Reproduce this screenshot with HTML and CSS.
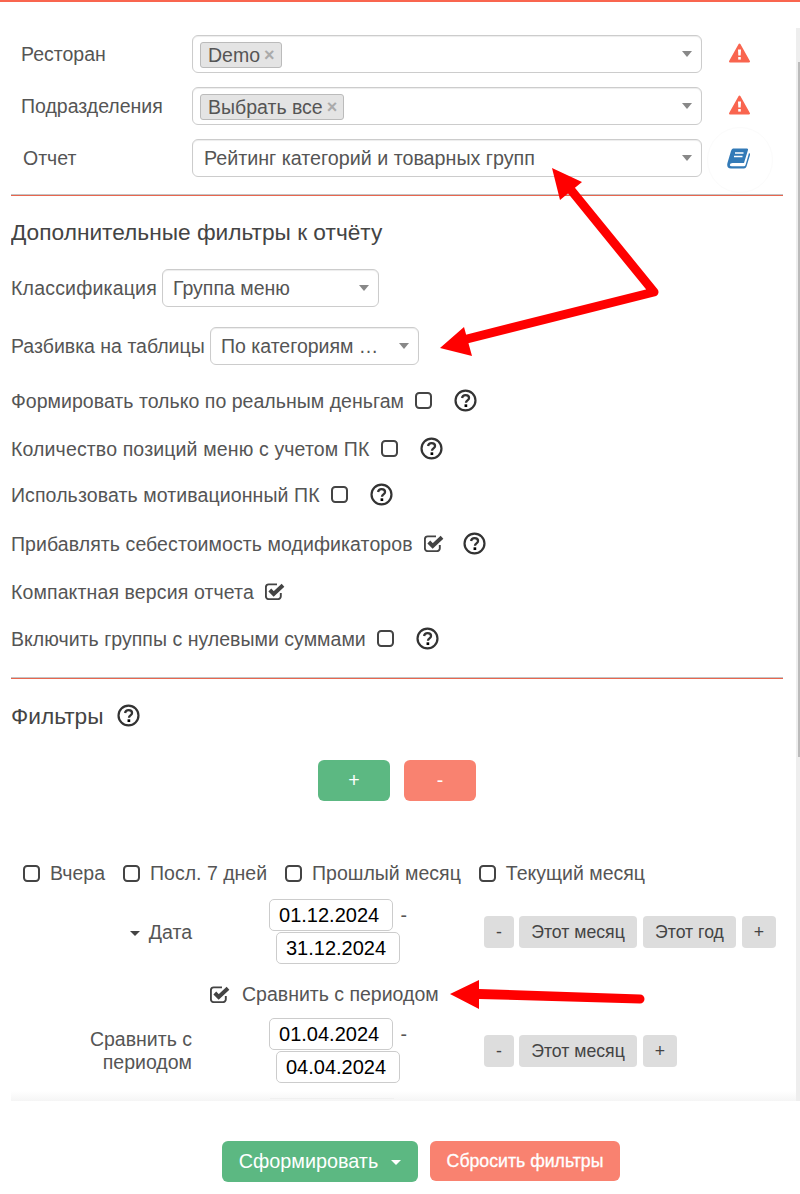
FILE: index.html
```html
<!DOCTYPE html>
<html lang="ru">
<head>
  <meta charset="UTF-8">
  <title>Отчет</title>
  <meta name="viewport" content="width=device-width, initial-scale=1.0">
  <link rel="stylesheet" href="styles.css">
</head>
<body>
  <svg class="defs" width="0" height="0" aria-hidden="true">
    <symbol id="i-help" viewBox="0 0 24 24">
      <circle cx="12" cy="12" r="10.400" fill="none" stroke="currentColor" stroke-width="2.300"/>
      <path d="M8.400 9.400c.3-2 1.800-3 3.700-3 2.100 0 3.600 1.200 3.600 3 0 2.600-3.200 2.500-3.200 5" fill="none" stroke="currentColor" stroke-width="2.400"/>
      <rect x="11" y="16" width="2.800" height="2.800"/>
    </symbol>
    <symbol id="i-box" viewBox="0 0 17 17">
      <rect x="1" y="1" width="15" height="15" rx="3.200" fill="none" stroke="currentColor" stroke-width="2"/>
    </symbol>
    <symbol id="i-check" viewBox="0 0 20 17">
      <path d="M15.800 10v3.300a2.800 2.800 0 0 1-2.800 2.800H3.700a2.800 2.800 0 0 1-2.800-2.800V4.200a2.800 2.800 0 0 1 2.800-2.800H12" fill="none" stroke="currentColor" stroke-width="1.900"/>
      <path d="M4.800 7l3.900 3.900L18 2.300" fill="none" stroke="currentColor" stroke-width="4"/>
    </symbol>
    <symbol id="i-warn" viewBox="0 0 21 20">
      <path d="M10.500 1.500 20 18.500H1Z" stroke="currentColor" stroke-width="2" stroke-linejoin="round"/>
      <path d="M9 6.500h3l-.3 6h-2.400Z" fill="#fff"/>
      <rect x="9.200" y="14" width="2.600" height="2.600" fill="#fff"/>
    </symbol>
  </svg>

  <div class="top-line"></div>

  <main class="panel">
    <section class="main-rows">
      <div class="main-row">
        <label class="main-label">Ресторан</label>
        <div class="select">
          <span class="tag">Demo<span class="tag-x">×</span></span>
          <span class="caret"></span>
        </div>
        <span class="side-icon"><svg class="warn"><use href="#i-warn"/></svg></span>
      </div>
      <div class="main-row">
        <label class="main-label">Подразделения</label>
        <div class="select">
          <span class="tag">Выбрать все<span class="tag-x">×</span></span>
          <span class="caret"></span>
        </div>
        <span class="side-icon"><svg class="warn"><use href="#i-warn"/></svg></span>
      </div>
      <div class="main-row">
        <label class="main-label shift">Отчет</label>
        <div class="select">
          <span class="select-text wide">Рейтинг категорий и товарных групп</span>
          <span class="caret"></span>
        </div>
        <span class="side-icon ring">
          <svg class="book" viewBox="0 0 24 21">
            <path d="M6 .5H20Q21.500 .5 21 2L17 15H5.500Q3 15 2.800 17Q2.800 18.300 5 18.300H17Q18 18.300 18.500 17L22 5Q23.500 5.500 23 7L19.500 18.500Q18.800 20.500 17 20.500H4Q0 20.500 .2 16.500Q.3 15.500 .6 14.500L4 3Q4.800 .5 6 .5Z" fill="#337ab7"/>
            <path d="M8 5H16.500M7 8.500H15.500" stroke="#fff" stroke-width="1.600"/>
          </svg>
        </span>
      </div>
    </section>

    <hr class="divider first">

    <h2 class="title">Дополнительные фильтры к отчёту</h2>

    <div class="extra-row one">
      <label>Классификация</label>
      <div class="select w217"><span class="select-text">Группа меню</span><span class="caret"></span></div>
    </div>
    <div class="extra-row two">
      <label>Разбивка на таблицы</label>
      <div class="select w209"><span class="select-text">По категориям …</span><span class="caret"></span></div>
    </div>

    <div class="opt opt1">Формировать только по реальным деньгам<svg class="box"><use href="#i-box"/></svg><svg class="help"><use href="#i-help"/></svg></div>
    <div class="opt opt2">Количество позиций меню с учетом ПК<svg class="box"><use href="#i-box"/></svg><svg class="help"><use href="#i-help"/></svg></div>
    <div class="opt opt3">Использовать мотивационный ПК<svg class="box"><use href="#i-box"/></svg><svg class="help"><use href="#i-help"/></svg></div>
    <div class="opt opt4">Прибавлять себестоимость модификаторов<svg class="tick"><use href="#i-check"/></svg><svg class="help"><use href="#i-help"/></svg></div>
    <div class="opt opt5">Компактная версия отчета<svg class="tick"><use href="#i-check"/></svg></div>
    <div class="opt opt6">Включить группы с нулевыми суммами<svg class="box"><use href="#i-box"/></svg><svg class="help"><use href="#i-help"/></svg></div>

    <hr class="divider second">

    <h2 class="title filters">Фильтры<svg class="help"><use href="#i-help"/></svg></h2>

    <div class="add-remove">
      <button class="btn green">+</button>
      <button class="btn salmon">-</button>
    </div>

    <div class="presets">
      <span class="preset"><svg class="box"><use href="#i-box"/></svg>Вчера</span>
      <span class="preset"><svg class="box"><use href="#i-box"/></svg>Посл. 7 дней</span>
      <span class="preset"><svg class="box"><use href="#i-box"/></svg>Прошлый месяц</span>
      <span class="preset"><svg class="box"><use href="#i-box"/></svg>Текущий месяц</span>
    </div>

    <div class="date-row">
      <div class="date-label"><span class="down"></span>Дата</div>
      <div class="date-col">
        <div class="dates"><input class="date" value="01.12.2024"> - <input class="date" value="31.12.2024"></div>
      </div>
      <div class="date-btns">
        <button class="gray w30">-</button>
        <button class="gray w118">Этот месяц</button>
        <button class="gray w93">Этот год</button>
        <button class="gray w34">+</button>
      </div>
    </div>

    <div class="compare"><svg class="tick"><use href="#i-check"/></svg>Сравнить с периодом</div>

    <div class="date-row last">
      <div class="date-label">Сравнить с периодом</div>
      <div class="date-col">
        <div class="dates"><input class="date" value="01.04.2024"> - <input class="date" value="04.04.2024"></div>
      </div>
      <div class="date-btns">
        <button class="gray w30">-</button>
        <button class="gray w118">Этот месяц</button>
        <button class="gray w34">+</button>
      </div>
    </div>
    <div class="fade"></div>
  </main>

  <footer class="actions">
    <button class="btn green make">Сформировать<span class="down white"></span></button>
    <button class="btn salmon reset">Сбросить фильтры</button>
  </footer>

  <div class="scroll-track"><div class="scroll-thumb"></div></div>

  <!-- стрелки поверх скриншота -->
  <svg class="arrows" width="800" height="1194" viewBox="0 0 800 1194">
    <path d="M571 190 654 292 463 340" fill="none" stroke="#f00" stroke-width="9" stroke-linejoin="round"/>
    <path d="M552 168 582 182 560 200Z M440 348 464 327 472 356Z" fill="#f00"/>
    <path d="M479 980 450 994 479 1009 479 999 640 1003.500a4 4 0 0 0 0-9L479 989Z" fill="#f00"/>
  </svg>
</body>
</html>
```

FILE: styles.css
```css
* {box-sizing:border-box;}
html, body {margin:0; padding:0;}
body {
  position:relative;
  width:800px; height:1194px;
  overflow:hidden;
  background:#fff;
  color:#555;
  font-family:"Liberation Sans",Arial,sans-serif;
  font-size:19.500px;
}
.defs {position:absolute;}
.top-line {height:2px; background:#f9654f;}

.panel {
  position:relative;
  height:1099px;
  margin-left:11px; margin-right:4px;
  padding-right:13px;
  overflow:hidden;
}

/* верхние строки */
.main-rows {padding-top:33px; display:flex; flex-direction:column; gap:14px;}
.main-row {display:flex; align-items:center; height:38px;}
.main-label {width:181px; padding-left:10px;}
.main-label.shift {padding-left:12px;}
.select {
  position:relative;
  display:flex; align-items:center;
  width:510px; height:38px;
  padding:0 11px 0 7px;
  border:1px solid #ccc;
  border-radius:6px;
  background:#fff;
  box-shadow:inset 0 1px 1px rgba(0,0,0,0.075);
}
.select-text {padding-left:3px; white-space:nowrap;}
.select-text.wide {padding-left:4px; font-size:19.700px;}
.w217 {width:217px;}
.w209 {width:209px;}
.tag {
  display:inline-flex; align-items:center;
  height:26px; margin-top:2px; padding:0 6px 0 7px;
  border:1px solid #bbb;
  border-radius:3px;
  background:#e4e4e4;
}
.tag-x {margin-left:4px; color:#aaa; font-weight:bold; font-size:18px;}
.caret {
  position:absolute; right:9px; top:15px;
  border-top:6px solid #888;
  border-left:5px solid transparent;
  border-right:5px solid transparent;
}
.side-icon {
  position:relative;
  display:flex; justify-content:center; align-items:center;
  width:74px; height:38px;
}
.warn {width:21px; height:20px; margin-top:-2px; color:#f9654f; fill:currentColor;}
.book {width:24px; height:21px;}
.ring::after {
  content:"";
  position:absolute; left:5px; top:-12px;
  width:64px; height:64px;
  border:1px solid #fbfbfb;
  border-radius:50%;
}

.divider {margin:0; border:0; border-top:1px solid #c4c4c4; height:2px; background:#e8664f;}
.divider.first {margin-top:17px;}
.divider.second {margin-top:26px;}

.title {margin:0; font-size:22.700px; font-weight:normal; color:#444; line-height:26px;}
.divider.first + .title {margin-top:23px;}
.title.filters {display:flex; align-items:center; margin-top:24px;}
.title.filters .help {margin-left:13px;}

.extra-row {display:flex; align-items:center;}
.extra-row.one {margin-top:24px; letter-spacing:.2px;}
.extra-row.two {margin-top:20px;}
.extra-row.one label {width:151px;}
.extra-row.two label {width:199px;}
.extra-row .select-text {letter-spacing:0;}

.box {width:17px; height:17px; color:#444; flex:none;}
.tick {width:20px; height:17px; color:#444; flex:none;}
.help {width:23px; height:23px; margin-top:-2px; color:#333; flex:none;}
.opt {display:flex; align-items:center; height:24px; white-space:nowrap;}
.opt .box, .opt .tick {margin-left:11px; margin-top:-1px;}
.opt .help {margin-left:22px;}
.opt .tick + .help {margin-left:19px;}
.opt1 {margin-top:24px; letter-spacing:.03px;}
.opt2 {margin-top:24px; letter-spacing:.14px;}
.opt3 {margin-top:22px; letter-spacing:.1px;}
.opt4 {margin-top:25px; letter-spacing:.08px;}
.opt5 {margin-top:24px; letter-spacing:.12px;}
.opt6 {margin-top:23px; letter-spacing:.03px;}

/* кнопки */
button {font-family:inherit; border:0; cursor:pointer;}
.btn {height:41px; border-radius:6px; color:#fff; font-size:19.500px;}
.green {background:#5cb882;}
.salmon {background:#f98270;}
.add-remove {display:flex; justify-content:center; gap:14px; margin-top:31px;}
.add-remove .btn {width:72px;}

.presets {display:flex; gap:18px; margin-top:60px; padding-left:12px; height:24px; align-items:center;}
.preset {display:flex; align-items:center; gap:10px; white-space:nowrap;}

.date-row {display:flex; align-items:center; margin-top:14px;}
.date-label {width:181px; text-align:right; line-height:23px;}
.date-col {width:292px;}
.dates {width:150px; margin:0 auto; text-align:center; line-height:0; word-spacing:2px;}
.date {
  width:124px; height:32px;
  padding:0 9px;
  border:1px solid #ccc;
  border-radius:5px;
  color:#000;
  font:20px "Liberation Sans",Arial,sans-serif;
  margin-bottom:1px;
}
.date-btns {display:flex; gap:6px;}
.gray {
  height:32px;
  border-radius:4px;
  background:#ddd;
  color:#444;
  font-size:17.700px;
  padding:0;
}
.w30 {width:30px; margin-right:-1px;}
.w118 {width:118px;}
.w93 {width:93px;}
.w34 {width:34px;}
.down {
  display:inline-block;
  width:0; height:0;
  margin-right:9px;
  vertical-align:middle;
  border-top:5px solid #444;
  border-left:5px solid transparent;
  border-right:5px solid transparent;
}
.down.white {margin:0 0 0 13px; border-top-color:#fff;}

.compare {display:flex; align-items:center; gap:12px; height:24px; margin:17px 0 0 199px;}
.date-row.last {margin-top:12px;}

.fade {
  position:absolute; left:0; right:0; bottom:0;
  height:10px;
  background:linear-gradient(rgba(245,245,245,0),#f5f5f5);
}
/* верх следующего поля, обрезанного панелью */
.fade::after {
  content:"";
  position:absolute; left:259px; top:7px;
  width:124px; height:1px;
  background:#f0f0f0;
}

/* нижние кнопки */
.actions {display:flex; gap:12px; padding:40px 0 0 222px;}
.make {width:196px; font-size:19.800px;}
.reset {width:190px; height:40px; font-size:17.700px; -webkit-text-stroke:.3px #fff;}

.scroll-track {position:absolute; right:0; top:28px; width:4px; height:1073px; background:#eee;}
.scroll-thumb {margin:34px 0 0 2px; height:695px; background:#bbb;}

.arrows {position:absolute; left:0; top:0; pointer-events:none;}
```
